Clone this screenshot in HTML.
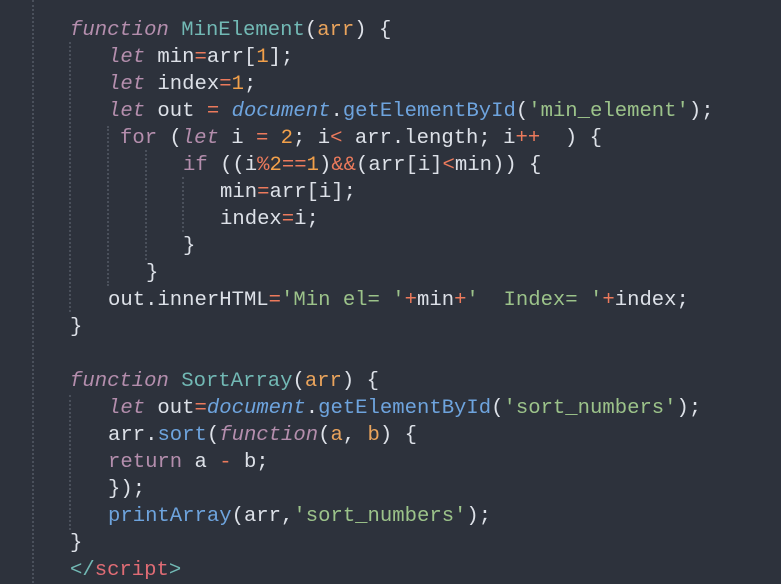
<!DOCTYPE html>
<html><head><style>
body{margin:0;width:781px;height:583px;background:#2d323c;overflow:hidden;position:relative;font-family:"Liberation Mono",monospace;font-size:20.6px;color:#dde1e8}
.l{position:absolute;white-space:pre;height:27px;line-height:27px}
.k{color:#b48ead;font-style:italic}.kw{color:#b48ead}
.f{color:#72b9b5}.p{color:#eaa45c}.o{color:#ec7a5c}.n{color:#f2a04a}
.d{color:#6ea4de;font-style:italic}.m{color:#6ea4de}.s{color:#9cc38a}.r{color:#e06c75}
.g{position:absolute;width:0;border-left:2px dotted #4a505b}
</style></head><body>
<div class="g" style="left:32px;top:0;height:583px"></div>
<div class="g" style="left:69px;top:42px;height:270px"></div>
<div class="g" style="left:107px;top:126px;height:160px"></div>
<div class="g" style="left:145px;top:150px;height:110px"></div>
<div class="g" style="left:182px;top:177px;height:55px"></div>
<div class="g" style="left:69px;top:395px;height:135px"></div>
<div class="l" style="left:70px;top:17px"><span class="k">function</span> <span class="f">MinElement</span>(<span class="p">arr</span>) {</div>
<div class="l" style="left:108px;top:44px"><span class="k">let</span> min<span class="o">=</span>arr[<span class="n">1</span>];</div>
<div class="l" style="left:108px;top:71px"><span class="k">let</span> index<span class="o">=</span><span class="n">1</span>;</div>
<div class="l" style="left:108px;top:98px"><span class="k">let</span> out <span class="o">=</span> <span class="d">document</span>.<span class="m">getElementById</span>(<span class="s">'min_element'</span>);</div>
<div class="l" style="left:120px;top:125px"><span class="kw">for</span> (<span class="k">let</span> i <span class="o">=</span> <span class="n">2</span>; i<span class="o">&lt;</span> arr.length; i<span class="o">++</span>  ) {</div>
<div class="l" style="left:183px;top:152px"><span class="kw">if</span> ((i<span class="o">%</span><span class="n">2</span><span class="o">==</span><span class="n">1</span>)<span class="o">&amp;&amp;</span>(arr[i]<span class="o">&lt;</span>min)) {</div>
<div class="l" style="left:220px;top:179px">min<span class="o">=</span>arr[i];</div>
<div class="l" style="left:220px;top:206px">index<span class="o">=</span>i;</div>
<div class="l" style="left:183px;top:233px">}</div>
<div class="l" style="left:146px;top:260px">}</div>
<div class="l" style="left:108px;top:287px">out.innerHTML<span class="o">=</span><span class="s">'Min el= '</span><span class="o">+</span>min<span class="o">+</span><span class="s">'  Index= '</span><span class="o">+</span>index;</div>
<div class="l" style="left:70px;top:314px">}</div>
<div class="l" style="left:70px;top:368px"><span class="k">function</span> <span class="f">SortArray</span>(<span class="p">arr</span>) {</div>
<div class="l" style="left:108px;top:395px"><span class="k">let</span> out<span class="o">=</span><span class="d">document</span>.<span class="m">getElementById</span>(<span class="s">'sort_numbers'</span>);</div>
<div class="l" style="left:108px;top:422px">arr.<span class="m">sort</span>(<span class="k">function</span>(<span class="p">a</span>, <span class="p">b</span>) {</div>
<div class="l" style="left:108px;top:449px"><span class="kw">return</span> a <span class="o">-</span> b;</div>
<div class="l" style="left:108px;top:476px">});</div>
<div class="l" style="left:108px;top:503px"><span class="m">printArray</span>(arr,<span class="s">'sort_numbers'</span>);</div>
<div class="l" style="left:70px;top:530px">}</div>
<div class="l" style="left:70px;top:557px"><span class="f">&lt;/</span><span class="r">script</span><span class="f">&gt;</span></div>
</body></html>
